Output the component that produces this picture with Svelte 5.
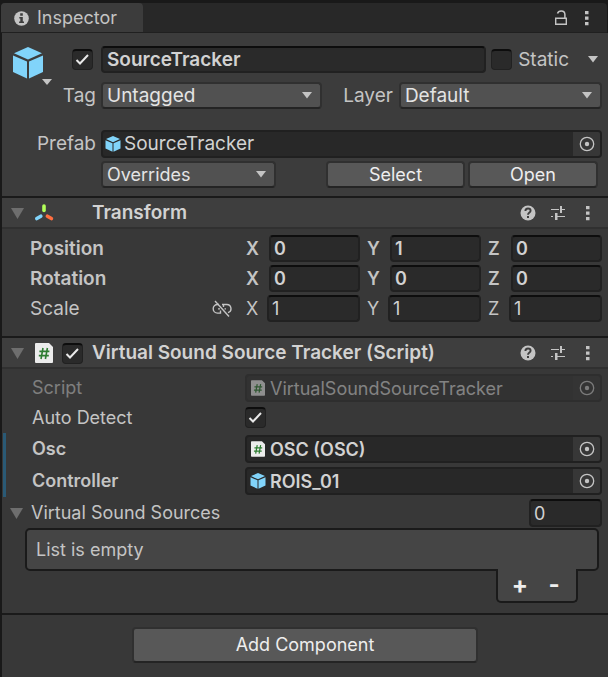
<script>
  let active = $state(true);
  let isStatic = $state(false);
  let scriptEnabled = $state(true);
  let autoDetect = $state(true);
  let name = $state('SourceTracker');
  let size = $state('0');

  const vectors = $state([
    { label: 'Position', bold: true, x: '0', y: '1', z: '0' },
    { label: 'Rotation', bold: true, x: '0', y: '0', z: '0' },
    { label: 'Scale', bold: false, x: '1', y: '1', z: '1' }
  ]);
  const axes = ['x', 'y', 'z'];
</script>

{#snippet cube(px)}
  <svg width={px} height={px} viewBox="0 0 32 32" aria-hidden="true">
    <path d="M16 0 30 6.2 16 12.6 2 6.2Z" fill="#81d4fa" />
    <path d="M1 8.4 15 14.6V31.6L1 25Z" fill="#81d4fa" />
    <path d="M31 8.4 17 14.6V31.6L31 25Z" fill="#81d4fa" />
  </svg>
{/snippet}

{#snippet scriptIcon(w, h)}
  <svg class="doc" width={w} height={h} viewBox="0 0 18 20" aria-hidden="true">
    <path d="M1 0H14L18 4V19a1 1 0 0 1-1 1H1a1 1 0 0 1-1-1V1a1 1 0 0 1 1-1Z" fill="#ececec" />
    <path d="M8 5 6 16M12.4 5 10.4 16M4.4 8.4H14.4M3.8 12.6H13.8" stroke="#2e7d32" stroke-width="1.6" fill="none" />
  </svg>
{/snippet}

{#snippet arrow()}
  <svg class="arrow" width="12" height="7" viewBox="0 0 12 7" aria-hidden="true"><path d="M1 0H11L6 6.5Z" fill="#c4c4c4" /></svg>
{/snippet}

{#snippet fold()}
  <svg width="13" height="11" viewBox="0 0 13 11" aria-hidden="true"><path d="M0 0H13L6.5 11Z" fill="#6e6e6e" /></svg>
{/snippet}

{#snippet dots()}
  <svg width="4" height="16" viewBox="0 0 4 16" aria-hidden="true">
    <path d="M0 1H3.5V4.3H0ZM0 6.500H3.500V9.800H0ZM0 12H3.500V15.300H0Z" fill="#c4c4c4" />
  </svg>
{/snippet}

{#snippet headerTools()}
  <div class="tools">
    <button class="plain" aria-label="Help">
      <svg width="16" height="16" viewBox="0 0 16 16" aria-hidden="true">
        <circle cx="8" cy="8" r="7.5" fill="#c4c4c4" />
        <path d="M5.4 6.1C5.4 4.3 6.5 3.5 8 3.5s2.6.9 2.6 2.3C10.6 7.5 8 7.6 8 9.8" stroke="#3e3e3e" stroke-width="1.9" fill="none" />
        <rect x="7" y="11" width="2" height="2" fill="#3e3e3e" />
      </svg>
    </button>
    <button class="plain" aria-label="Presets">
      <svg width="16" height="16" viewBox="0 0 16 16" aria-hidden="true">
        <path d="M1 4.5H9M12 4.5H15M1 11.5H3M7 11.5H15" stroke="#c4c4c4" stroke-width="1.2" fill="none" />
        <path d="M10 1H12V8H10ZM5 8H7.500V15H5Z" fill="#c4c4c4" />
      </svg>
    </button>
    <button class="plain" aria-label="More">{@render dots()}</button>
  </div>
{/snippet}

{#snippet target(label)}
  <button class="pick" aria-label={label}>
    <svg width="16" height="16" viewBox="0 0 16 16" aria-hidden="true">
      <circle cx="8" cy="8" r="6.7" stroke="#c4c4c4" stroke-width="1.3" fill="none" />
      <circle cx="8" cy="8" r="2.2" fill="#c4c4c4" />
    </svg>
  </button>
{/snippet}

<main>
  <nav>
    <button class="tab">
      <svg width="15" height="15" viewBox="0 0 15 15" aria-hidden="true">
        <circle cx="7.5" cy="7.5" r="7.3" fill="#c4c4c4" />
        <path d="M6.200 2.300H8.800V4.800H6.200ZM5.300 6H8.800V10.500H10V12H5.100V10.500H6.300V7.400H5.300Z" fill="#3c3c3c" />
      </svg>
      Inspector
    </button>
    <div class="tabtools">
      <button class="plain" aria-label="Lock">
        <svg width="12" height="16" viewBox="0 0 12 16" aria-hidden="true">
          <path d="M.7 8.200H11.300V14.300H.7Z" stroke="#c4c4c4" stroke-width="1.400" fill="none" />
          <path d="M2.500 3.500C3 1.800 4.300 1 6.200 1 8.600 1 9.900 2.400 9.900 4.500V8" stroke="#c4c4c4" stroke-width="1.500" fill="none" />
        </svg>
      </button>
      <button class="plain" aria-label="Window menu">{@render dots()}</button>
    </div>
  </nav>

  <div class="panel">
    <header>
      <button class="plain objicon" aria-label="Object icon">
        {@render cube(32)}
        <svg class="mini" width="10" height="6" viewBox="0 0 10 6" aria-hidden="true"><path d="M0 0H10L5 6Z" fill="#c4c4c4" /></svg>
      </button>
      <div class="line name">
        <div class="lead"><input type="checkbox" aria-label="Active" bind:checked={active} /></div>
        <input class="text bold" aria-label="Name" bind:value={name} />
        <label class="static"><input type="checkbox" bind:checked={isStatic} />Static</label>
        <button class="plain" aria-label="Static options">{@render arrow()}</button>
      </div>
      <div class="line tags">
        <label class="lead" for="tag">Tag</label>
        <div class="drop tag"><select id="tag"><option>Untagged</option></select>{@render arrow()}</div>
        <label class="layerlabel" for="layer">Layer</label>
        <div class="drop layer"><select id="layer"><option>Default</option></select>{@render arrow()}</div>
      </div>
      <div class="line prefab">
        <label class="lead" for="prefab">Prefab</label>
        <div class="object">
          {@render cube(16)}
          <input id="prefab" readonly value="SourceTracker" />
          {@render target('Pick prefab')}
        </div>
      </div>
      <div class="line actions">
        <div class="drop overrides"><select aria-label="Overrides"><option>Overrides</option></select>{@render arrow()}</div>
        <button class="btn select">Select</button>
        <button class="btn open">Open</button>
      </div>
    </header>

    <section>
      <div class="title">
        <button class="plain fold" aria-label="Fold Transform">{@render fold()}</button>
        <span class="kind">
          <svg width="20" height="20" viewBox="0 0 20 20" aria-hidden="true">
            <g fill="none" stroke-width="3.6" stroke-linecap="round">
              <path d="M10 3V7.500" stroke="#b2ff59" />
              <path d="M6.800 13.200 2.800 15.500" stroke="#81d4fa" />
              <path d="M13.400 13.200 17.400 15.500" stroke="#ff6e40" />
            </g>
          </svg>
        </span>
        <h2>Transform</h2>
        {@render headerTools()}
      </div>
      <div class="vectors">
        {#each vectors as v}
          <div class="vector" class:bold={v.bold}>
            <div class="vlabel">
              {v.label}
              {#if !v.bold}
                <button class="plain" aria-label="Constrain proportions">
                  <svg width="20" height="18" viewBox="0 0 20 18" aria-hidden="true">
                    <g stroke="#c4c4c4" stroke-width="1.4" fill="none">
                      <path d="M7 4.500H5.500a4.200 4.200 0 0 0 0 8.600H8.500V10.500M10 4.500H14.500a4.200 4.200 0 0 1 1.500 8.200M11.500 4.500V7M6 8.900H8M12.500 8.900H14" />
                      <path d="M3 1 17 16.500" />
                    </g>
                  </svg>
                </button>
              {/if}
            </div>
            <div class="axes">
              {#each axes as a}
                <label class="axis"><span>{a.toUpperCase()}</span><input class="text" bind:value={v[a]} /></label>
              {/each}
            </div>
          </div>
        {/each}
      </div>
    </section>

    <section>
      <div class="title">
        <button class="plain fold" aria-label="Fold script">{@render fold()}</button>
        <span class="kind">{@render scriptIcon(18, 20)}</span>
        <input type="checkbox" aria-label="Script enabled" bind:checked={scriptEnabled} />
        <h2>Virtual Sound Source Tracker (Script)</h2>
        {@render headerTools()}
      </div>
      <div class="props">
        <div class="prop disabled">
          <label for="script">Script</label>
          <div class="object">
            {@render scriptIcon(14, 16)}
            <input id="script" readonly value="VirtualSoundSourceTracker" />
            {@render target('Pick script')}
          </div>
        </div>
        <div class="prop toggle">
          <label for="auto">Auto Detect</label>
          <input id="auto" type="checkbox" bind:checked={autoDetect} />
        </div>
        <div class="overridden bold">
          <div class="prop">
            <label for="osc">Osc</label>
            <div class="object">
              {@render scriptIcon(14, 16)}
              <input id="osc" readonly value="OSC (OSC)" />
              {@render target('Pick Osc')}
            </div>
          </div>
          <div class="prop">
            <label for="controller">Controller</label>
            <div class="object">
              {@render cube(16)}
              <input id="controller" readonly value="ROIS_01" />
              {@render target('Pick Controller')}
            </div>
          </div>
        </div>
        <div class="listhead">
          <button class="plain" aria-label="Fold list">{@render fold()}</button>
          <label for="size">Virtual Sound Sources</label>
          <input id="size" class="text" bind:value={size} />
        </div>
        <div class="list">List is empty</div>
        <div class="listfoot">
          <button class="plain" aria-label="Add item">+</button>
          <button class="plain" aria-label="Remove item">-</button>
        </div>
      </div>
    </section>

    <footer><button class="btn add">Add Component</button></footer>
  </div>
</main>

<style>
  :global(body) { margin: 0; background: #383838; }
  main, main * { box-sizing: border-box; }
  main {
    font: 18px/22px Inter, "Liberation Sans", sans-serif;
    color: #c4c4c4;
    background: #191919;
    padding-top: 3px;
  }
  button, input, select { font: inherit; color: inherit; margin: 0; border-radius: 4px; }
  svg { display: block; flex: none; }
  .plain { background: none; border: 0; padding: 0; display: flex; align-items: center; justify-content: center; }

  nav { display: flex; justify-content: space-between; height: 30px; background: #282828; border-bottom: 1px solid #202020; border-radius: 4px 4px 0 0; margin: 0 1px; }
  .tab { display: flex; align-items: center; gap: 8px; width: 142px; padding: 1px 0 0 13px; border: 0; background: #3c3c3c; border-radius: 4px 4px 0 0; }
  .tabtools { display: flex; gap: 18px; padding-right: 18px; }

  .panel { border-left: 2px solid #191919; background: #383838; }
  header { position: relative; background: #3c3c3c; padding: 13px 6px 8px 0; border-bottom: 2px solid #1a1a1a; }
  .objicon { position: absolute; left: 10px; top: 14px; }
  .mini { position: absolute; left: 30px; top: 32px; }
  .line { display: flex; align-items: center; height: 27px; }
  .name, .tags, .prefab, h2, .vlabel { font-size: 19px; }
  .lead { width: 99px; flex: none; display: flex; justify-content: flex-end; padding-right: 5px; }
  .name .lead { padding-right: 8px; }
  .name .text { flex: 1; min-width: 0; }
  .static { display: flex; align-items: center; gap: 6px; margin: 0 18px 0 5px; }
  .name > .plain { margin-right: 3px; }
  .tags { margin-top: 9px; }
  .prefab { margin-top: 21px; }
  .actions { margin-top: 4px; padding-left: 99px; }

  .text { height: 27px; width: 100%; padding: 0 3px; background: #2a2a2a; border: 2px solid #212121; border-top-color: #0d0d0d; color: #d2d2d2; }
  input[type='checkbox'] { appearance: none; width: 21px; height: 21px; flex: none; background: #2a2a2a; border: 1px solid #212121; border-top: 2px solid #0d0d0d; }
  input[type='checkbox']:checked {
    background-image: url("data:image/svg+xml,%3Csvg xmlns='http://www.w3.org/2000/svg' viewBox='0 0 19 18'%3E%3Cpath d='M3.500 9 7 12.500 15 4' fill='none' stroke='%23e8e8e8' stroke-width='2'/%3E%3C/svg%3E");
  }
  .drop { position: relative; height: 27px; }
  .drop select { appearance: none; width: 100%; height: 100%; padding: 0 24px 0 4px; background: #515151; border: 2px solid #303030; border-bottom-color: #242424; color: #e4e4e4; }
  .drop .arrow { position: absolute; right: 9px; top: 10px; pointer-events: none; }
  .tag { flex: 220; }
  .layerlabel { margin: 0 6px 0 21px; }
  .layer { flex: 202; }
  .overrides { flex: 175; }
  .btn { height: 27px; padding: 0; background: #585858; border: 2px solid #303030; border-bottom-color: #242424; color: #eee; }
  .select { flex: 135; margin-left: 50px; }
  .open { flex: 126; margin: 0 4px 0 3px; }
  .name .text { padding: 0 4px; }

  .object { flex: 1; min-width: 0; display: flex; align-items: center; height: 28px; background: #282828; border: 2px solid #202020; border-radius: 4px; padding-left: 3px; color: #d2d2d2; }
  .object .doc { margin: 0 1px; }
  .object input { flex: 1; min-width: 0; border: 0; padding: 0; margin-left: 4px; background: none; height: 24px; }
  .prefab .object { padding-left: 2px; }
  .prefab .object input { margin-left: 3px; }
  .pick { width: 27px; align-self: stretch; flex: none; display: flex; align-items: center; justify-content: center; border: 0; padding: 0; background: #373737; border-radius: 0 2px 2px 0; }

  section { border-bottom: 2px solid #1a1a1a; }
  .title { display: flex; align-items: center; height: 31px; padding: 1px 18px 0 9px; background: #3e3e3e; border-bottom: 2px solid #303030; }
  .fold { width: 13px; }
  .kind { width: 20px; display: flex; justify-content: center; margin: 0 8px 0 10px; }
  h2 { font-weight: 600; color: #d2d2d2; margin: 0; flex: 1; }
  .kind + h2 { padding-left: 30px; }
  .kind + input + h2 { padding-left: 9px; }
  .tools { display: flex; gap: 14px; }
  .tools .plain:last-child { margin-left: 6px; }
  .bold { font-weight: 600; }

  .vectors { display: grid; gap: 3px; padding: 6px 6px 14px 28px; }
  .vector { display: flex; height: 27px; align-items: center; }
  .vlabel { display: flex; justify-content: space-between; width: 216px; padding-right: 14px; flex: none; }
  .axes { flex: 1; display: grid; grid-template-columns: repeat(3, minmax(0, 1fr)); gap: 7px; }
  .axis { display: flex; align-items: center; }
  .axis span { width: 23px; flex: none; }
  .vector:not(.bold) .axis span { width: 21px; }

  .props { padding: 5px 6px 10px 0; }
  .prop { display: flex; align-items: center; height: 32px; padding-left: 30px; }
  .prop label { width: 213px; flex: none; }
  .prop.disabled { height: 28px; }
  .disabled label, .disabled .object > * { opacity: 0.5; }
  .disabled .object { background: #323232; border-color: #2e2e2e; }
  .toggle { height: 31px; }
  .overridden { border-left: 3px solid #2a5a76; margin: 0 0 2px 1px; }
  .overridden .prop { padding-left: 26px; }
  .listhead { display: flex; align-items: center; height: 28px; padding-left: 8px; gap: 8px; }
  .listhead label { flex: 1; }
  .listhead .text { width: 73px; height: 28px; }
  .list { margin: 1px 3px 0 23px; height: 43px; padding: 9px 9px 8px; background: #454545; border: 2px solid #1a1a1a; border-radius: 5px; }
  .listfoot { position: relative; display: flex; width: 82px; height: 34px; margin: -2px 24px 0 auto; background: #454545; border: 2px solid #1a1a1a; border-top: 0; border-radius: 0 0 5px 5px; padding: 0 5px; }
  .listfoot .plain { flex: 1; font-size: 24px; font-weight: 700; color: #eee; }

  footer { display: flex; justify-content: center; padding: 12px 0 14px; }
  .add { width: 57%; height: 36px; }
</style>
